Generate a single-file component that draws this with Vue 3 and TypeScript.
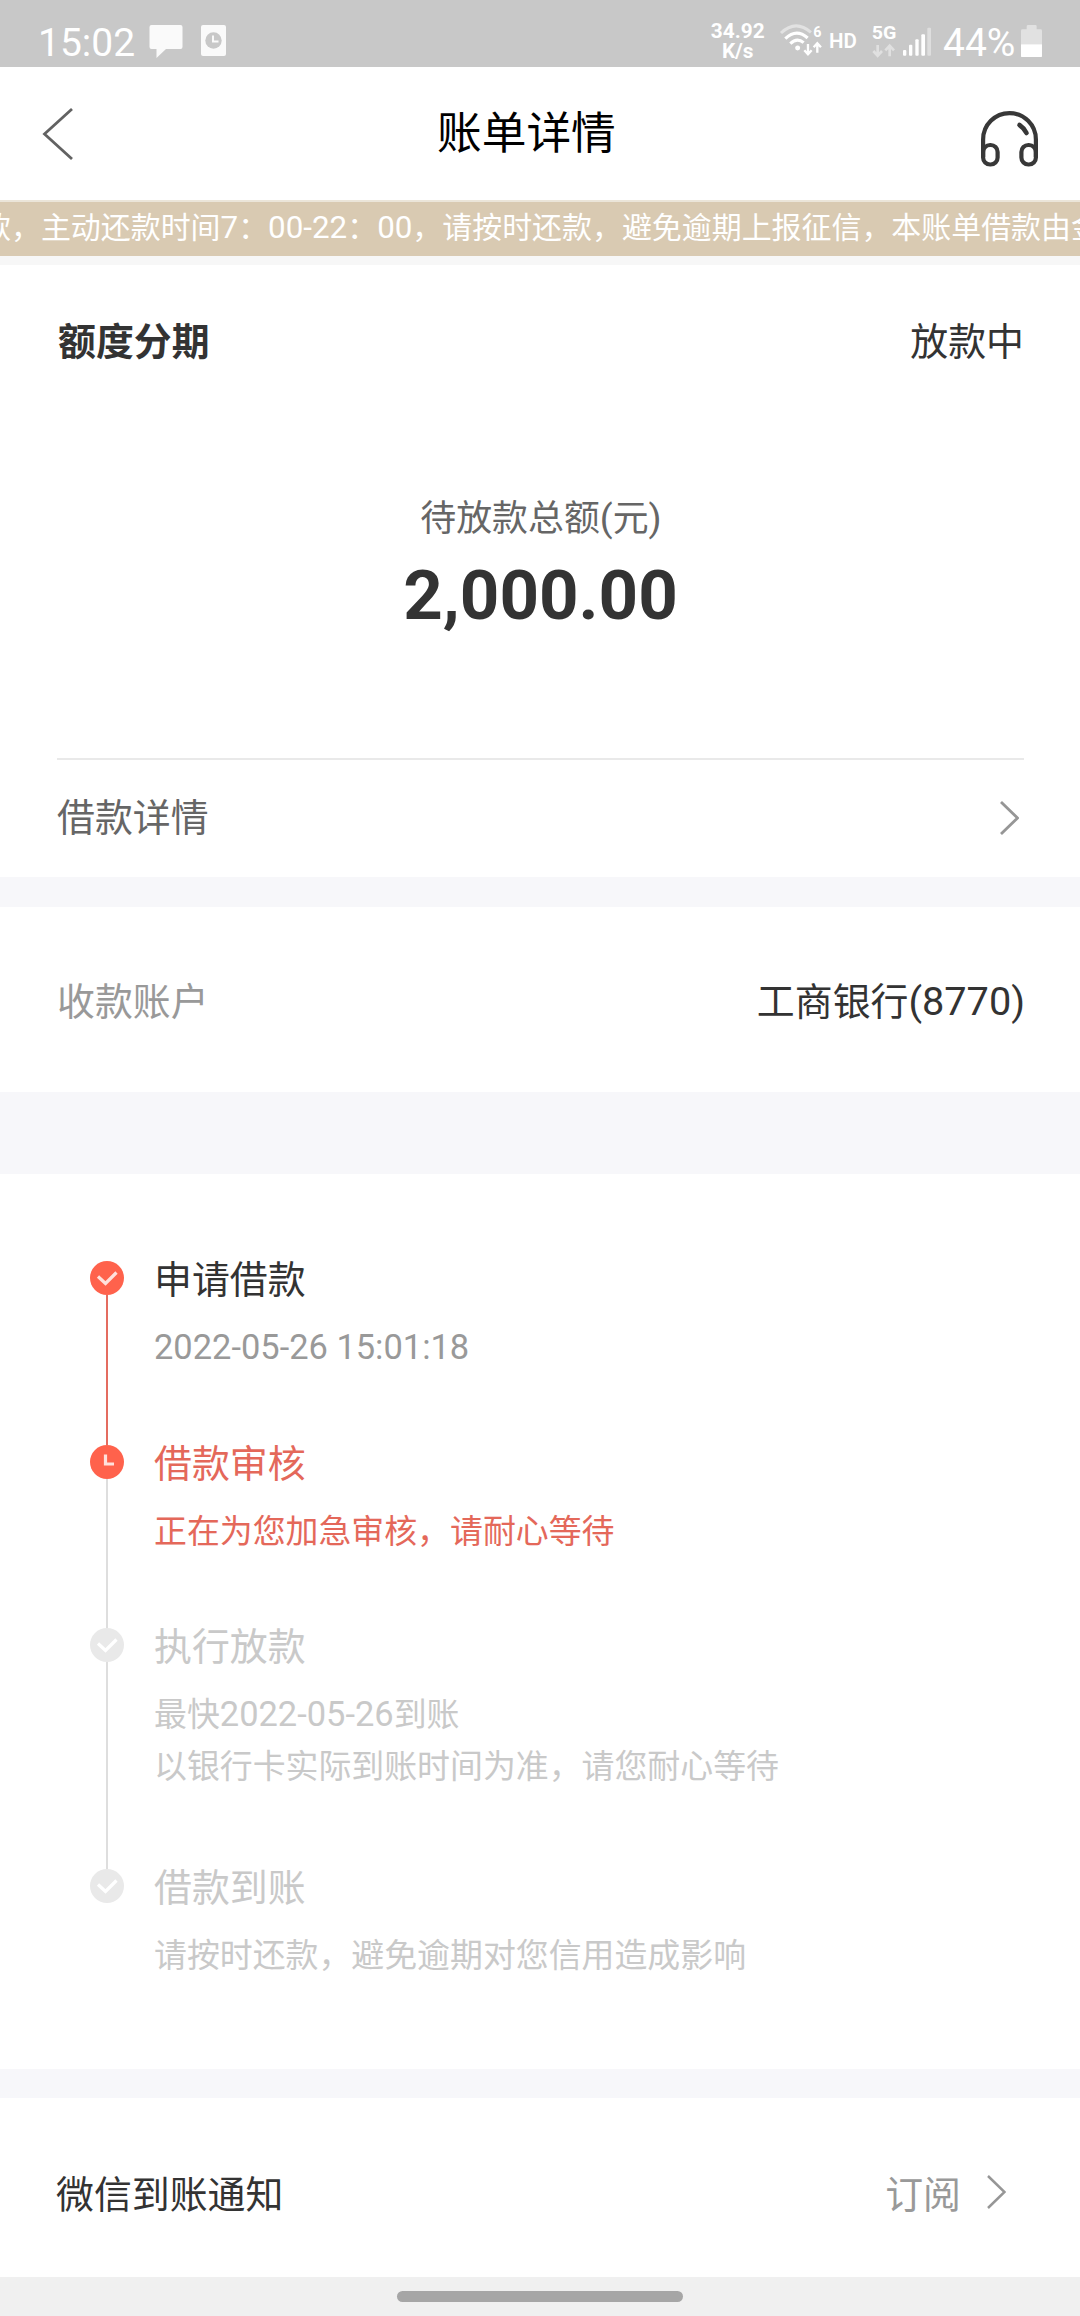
<script setup lang="ts">
import { h } from 'vue'

type StepState = 'done' | 'active' | 'pending'

interface Step {
  title: string
  lines: string[]
  state: StepState
  icon: 'check' | 'clock'
}

const notice =
  '款，主动还款时间7：00-22：00，请按时还款，避免逾期上报征信，本账单借款由金'

const steps: Step[] = [
  { title: '申请借款', lines: ['2022-05-26 15:01:18'], state: 'done', icon: 'check' },
  { title: '借款审核', lines: ['正在为您加急审核，请耐心等待'], state: 'active', icon: 'clock' },
  {
    title: '执行放款',
    lines: ['最快2022-05-26到账', '以银行卡实际到账时间为准，请您耐心等待'],
    state: 'pending',
    icon: 'check',
  },
  { title: '借款到账', lines: ['请按时还款，避免逾期对您信用造成影响'], state: 'pending', icon: 'check' },
]

// Latin runs are set slightly larger than the Chinese text around them.
const MixedText = (props: { text: string }) =>
  props.text
    .split(/([\x20-\x7e]+)/)
    .filter((part) => part.length > 0)
    .map((part) => (/^[\x20-\x7e]+$/.test(part) ? h('span', { class: 'latin' }, part) : part))
MixedText.props = ['text']
</script>

<template>
  <div class="page">
    <div class="status">
      <span class="clock">15:02</span>
      <svg class="chat" width="34" height="34" viewBox="0 0 34 34">
        <path d="M2.500 0h29a2 2 0 0 1 2 2v20a2 2 0 0 1-2 2H17L7.500 33V24h-5a2 2 0 0 1-2-2V2a2 2 0 0 1 2-2z" fill="#fafafa" />
      </svg>
      <svg class="record" width="25" height="31" viewBox="0 0 25 31">
        <rect width="25" height="31" rx="2" fill="#fafafa" />
        <circle cx="12.500" cy="15.500" r="8.200" fill="#c8c8c8" />
        <path d="M12 10.500v6h5.500" fill="none" stroke="#fafafa" stroke-width="2" />
      </svg>
      <span class="spacer"></span>
      <span class="speed">34.92<br />K/s</span>
      <svg class="wifi" width="43.300" height="35" viewBox="230 70 130 105">
        <path d="M236 100Q280 58 326 98" fill="none" stroke="#e2e2e2" stroke-width="9" />
        <g fill="none" stroke="#fff" stroke-width="9.500">
          <path d="M249 117Q282 85 316 115" />
          <path d="M264 132Q284 112 304 129" />
        </g>
        <circle cx="286" cy="145" r="7.500" fill="#fff" />
        <g fill="none" stroke="#fff" stroke-width="7">
          <path d="M317 133V164M306 152l11 12 11-12" />
          <path d="M345 159V131M334 143l11-12 11 12" />
        </g>
        <text x="333" y="111" font-size="43" font-weight="700" fill="#fff">6</text>
      </svg>
      <span class="hd">HD</span>
      <svg class="signal" width="62" height="35" viewBox="512 70 186 105">
        <text x="514" y="118" font-size="56" font-weight="700" fill="#fff" textLength="74" lengthAdjust="spacingAndGlyphs">5G</text>
        <g fill="none" stroke="#e0e0e0" stroke-width="8">
          <path d="M532 136V168M519 154l13 14 13-14" />
          <path d="M568 170V138M555 152l13-14 13 14" />
        </g>
        <g fill="#fff">
          <rect x="608" y="151" width="10" height="17" rx="3" />
          <rect x="626" y="135" width="10" height="33" rx="3" />
          <rect x="645" y="119" width="10" height="49" rx="3" />
          <rect x="663" y="104" width="11" height="64" rx="3" />
        </g>
        <rect x="681" y="84" width="11" height="84" rx="3" fill="#dedede" />
      </svg>
      <span class="percent">44%</span>
      <svg class="battery" width="21" height="32.300" viewBox="963 74 63 97">
        <path d="M980 87v-9q0-4 4-4h22q4 0 4 4v9h12q4 0 4 4v41h-63V91q0-4 4-4z" fill="#e1e1e1" />
        <path d="M963 132h63v35q0 4-4 4h-55q-4 0-4-4z" fill="#fff" />
      </svg>
    </div>

    <header class="header">
      <svg width="32" height="54" viewBox="0 0 32 54">
        <path d="M30 2 2.500 27 30 52" fill="none" stroke="#626262" stroke-width="2.800" />
      </svg>
      <h1>账单详情</h1>
      <svg class="headset" width="57" height="56" viewBox="0 0 57 56">
        <g fill="none" stroke="#383838" stroke-width="4.200">
          <path d="M2.100 46V28.500a26.400 26.400 0 0 1 52.800 0V46" />
          <rect x="2.100" y="34" width="14.500" height="19.500" rx="7" />
          <rect x="40.400" y="34" width="14.500" height="19.500" rx="7" />
          <path d="M38.500 14q4.500 3 7 8" stroke-width="4.600" stroke-linecap="round" />
        </g>
      </svg>
    </header>

    <div class="notice"><p><MixedText :text="notice" /></p></div>

    <section class="card summary">
      <div class="row head"><strong>额度分期</strong><span>放款中</span></div>
      <div class="label"><MixedText text="待放款总额(元)" /></div>
      <div class="amount">2,000.00</div>
      <div class="row detail">
        <span>借款详情</span>
        <svg width="19" height="34" viewBox="0 0 19 34">
          <path d="M1 1 17.500 17 1 33" fill="none" stroke="#969696" stroke-width="2.800" />
        </svg>
      </div>
    </section>

    <section class="card row account">
      <span class="muted">收款账户</span>
      <span><MixedText text="工商银行(8770)" /></span>
    </section>

    <section class="card timeline">
      <div v-for="step in steps" :key="step.title" class="step" :class="[step.state, { tall: step.lines.length > 1 }]">
        <div class="track">
          <svg class="dot" width="34" height="34" viewBox="0 0 34 34">
            <circle class="disc" cx="17" cy="17" r="17" />
            <path v-if="step.icon === 'check'" d="M8 15.500 15.500 22.500 26.500 11.500" fill="none" class="mark" stroke-width="3.200" />
            <path v-else d="M15.500 9.500V19H24" fill="none" class="mark" stroke-width="3.200" />
          </svg>
          <i class="line"></i>
        </div>
        <div class="body">
          <h2>{{ step.title }}</h2>
          <p v-for="line in step.lines" :key="line"><MixedText :text="line" /></p>
        </div>
      </div>
    </section>

    <section class="card row subscribe">
      <span>微信到账通知</span>
      <span class="action">
        订阅
        <svg width="19" height="34" viewBox="0 0 19 34">
          <path d="M1 1 17.500 17 1 33" fill="none" stroke="#969696" stroke-width="2.500" />
        </svg>
      </span>
    </section>

    <div class="gesture"><i></i></div>
  </div>
</template>

<style>
body {
  margin: 0;
}
.latin {
  font-size: 1.047em;
}
</style>

<style scoped>
.page {
  width: 1080px;
  height: 2316px;
  overflow: hidden;
  display: flex;
  flex-direction: column;
  background: #f7f7fa;
  color: #333;
  font-family: Roboto, 'Noto Sans CJK SC', sans-serif;
  font-size: 37.900px;
  line-height: 50px;
}
h1,
h2,
p {
  margin: 0;
  font-weight: 400;
}
svg {
  display: block;
  flex: none;
}
.status {
  box-sizing: border-box;
  height: 67px;
  flex: none;
  display: flex;
  align-items: flex-start;
  padding: 0 38px;
  background: #c8c8c8;
  color: #fff;
}
.clock,
.percent {
  font-size: 39px;
  line-height: 46px;
  margin-top: 20px;
}
.chat {
  margin: 25px 0 0 14px;
}
.record {
  margin: 25px 0 0 18px;
}
.spacer {
  flex: 1;
}
.speed {
  width: 58px;
  margin-top: 22px;
  text-align: center;
  font-size: 20.800px;
  font-weight: 700;
  line-height: 19.500px;
}
.wifi {
  margin: 23.300px 0 0 12px;
}
.hd {
  width: 28px;
  margin: 28.500px 0 0 7px;
  font-size: 20.500px;
  line-height: 24px;
  font-weight: 600;
}
.signal {
  margin: 23.300px 0 0 14px;
}
.percent {
  width: 72px;
  margin-left: 10px;
}
.battery {
  margin: 24.700px 0 0 6px;
}
.header {
  height: 133px;
  flex: none;
  box-sizing: border-box;
  display: grid;
  grid-template-columns: 395px 1fr 57px;
  align-items: center;
  padding: 0 42px;
  background: #fff;
}
.header h1 {
  margin-top: 1px;
  font-size: 44.700px;
  line-height: 60px;
  color: #000;
}
.headset {
  margin-top: 11px;
}
.notice {
  height: 54px;
  flex: none;
  overflow: hidden;
  border-top: 2px solid #ebe5d9;
  border-bottom: 9px solid #f7f7f7;
  background: #d9cab2;
  color: #fff;
}
.notice p {
  margin-left: -19px;
  white-space: nowrap;
  font-size: 29.950px;
  line-height: 51px;
}
.card {
  flex: none;
  box-sizing: border-box;
  background: #fff;
}
.row {
  display: flex;
  align-items: center;
  justify-content: space-between;
}
.summary {
  height: 612px;
  padding: 0 56px 0 57px;
}
.head {
  padding: 52px 0 0 1px;
}
.label {
  margin-top: 126px;
  padding-left: 1px;
  text-align: center;
  font-size: 35.900px;
  color: #666;
}
.amount {
  margin-top: 11px;
  text-align: center;
  font-size: 69px;
  line-height: 82px;
  font-weight: 700;
}
.detail {
  box-sizing: border-box;
  height: 119px;
  margin-top: 121px;
  padding: 0 5px 1px 0;
  border-top: 2px solid #e9e9e9;
  color: #666;
}
.account {
  height: 185px;
  margin-top: 30px;
  padding: 5px 55px 0 57px;
}
.muted {
  color: #999;
}
.timeline {
  height: 895px;
  margin-top: 82px;
  padding: 87px 90px 0;
}
.step {
  display: flex;
  height: 183.500px;
}
.step.tall {
  height: 240.800px;
}
.track {
  width: 34px;
  margin-right: 30px;
  display: flex;
  flex-direction: column;
  align-items: center;
}
.line {
  flex: 1;
  width: 2px;
  background: #dedede;
}
.step:last-child .line {
  display: none;
}
.disc {
  fill: #e9e9e9;
}
.mark {
  stroke: #fff;
}
.done .disc,
.active .disc {
  fill: #ff624c;
}
.done .mark,
.active .mark {
  stroke: #ffe1dc;
}
.done .line {
  background: #e46c60;
}
.body h2 {
  margin-bottom: 22px;
  font-size: 37.900px;
  line-height: 39px;
}
.body p {
  font-size: 32.900px;
  line-height: 51.500px;
}
.done p {
  color: #999;
}
.active .body {
  color: #e4685a;
}
.pending .body {
  color: #c9c9c9;
}
.subscribe {
  height: 179px;
  margin-top: 29px;
  padding: 14px 74px 0 56px;
}
.action {
  display: flex;
  align-items: center;
  gap: 26px;
  color: #999;
}
.action svg {
  margin-bottom: 5px;
}
.gesture {
  flex: 1;
  display: flex;
  justify-content: center;
  align-items: flex-start;
  background: #f0f0f0;
}
.gesture i {
  width: 286px;
  height: 11px;
  margin-top: 14px;
  border-radius: 6px;
  background: #a6a6a6;
}
</style>
